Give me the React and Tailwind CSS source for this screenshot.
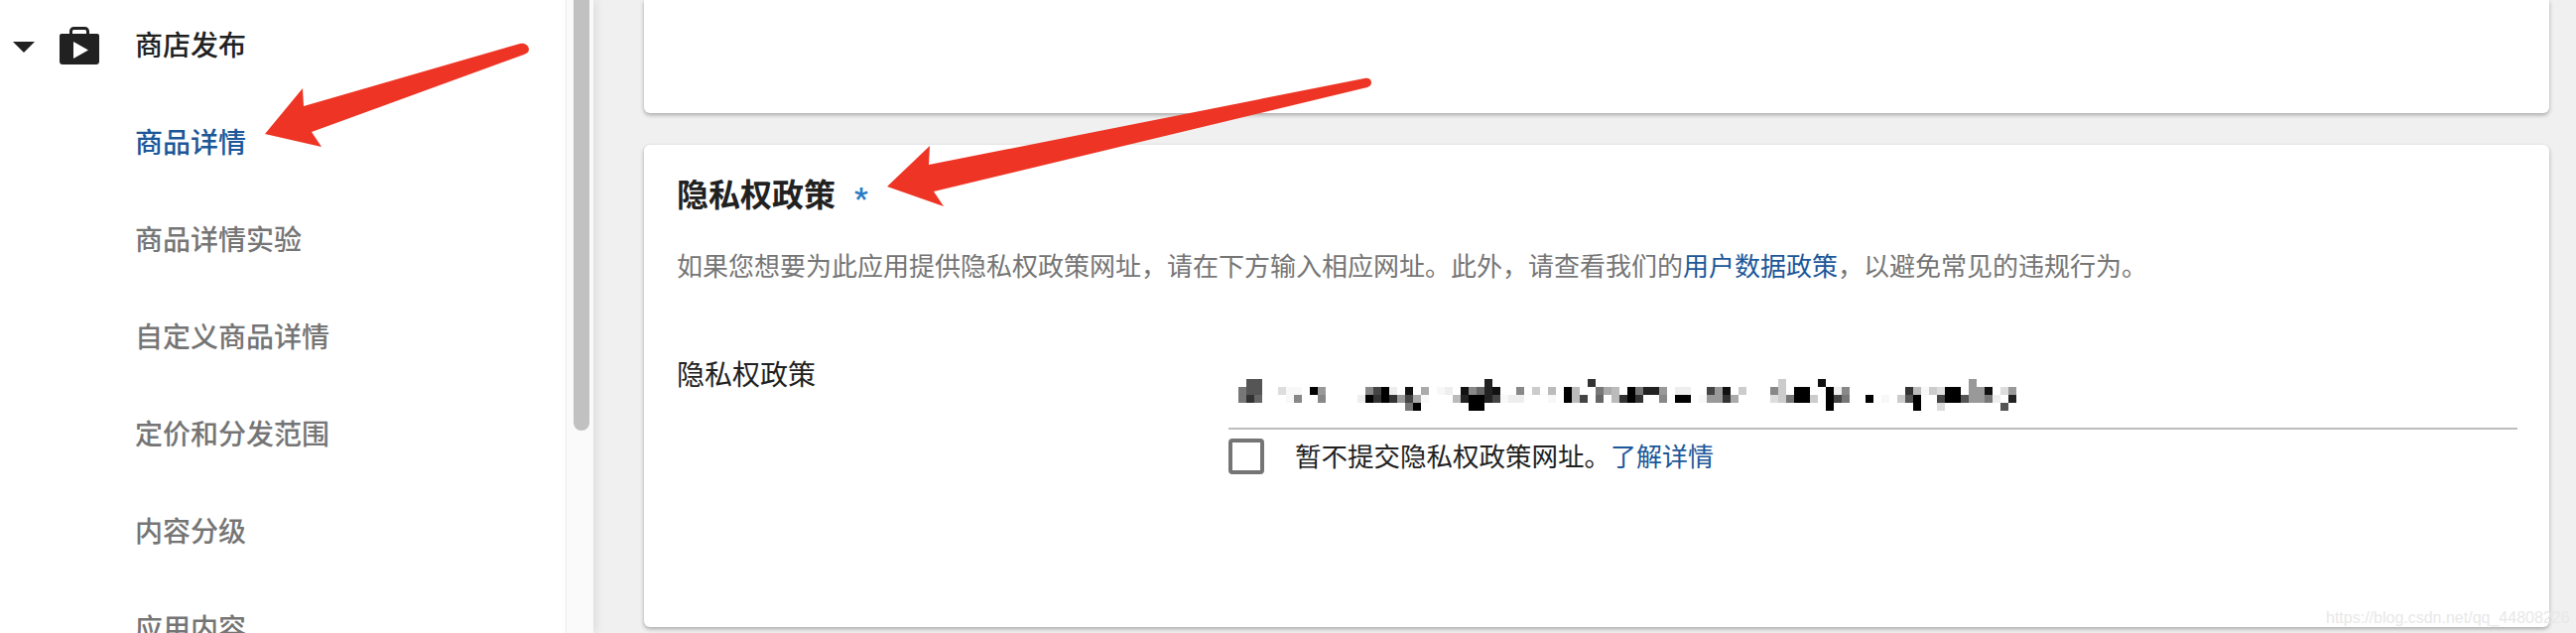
import React from 'react';

const navItems = [
  { label: '商品详情', color: 'text-[#1c5799]' },
  { label: '商品详情实验', color: 'text-[#757575]' },
  { label: '自定义商品详情', color: 'text-[#757575]' },
  { label: '定价和分发范围', color: 'text-[#757575]' },
  { label: '内容分级', color: 'text-[#757575]' },
  { label: '应用内容', color: 'text-[#757575]' },
];

const comma = '\uFF0C';

// blurred url: one string of "column:gray" pairs per 8px row
const mosaicRows = [
  '1:5 2:5 31:2 44:3 68:c 73:1 92:9',
  '0:7 1:5 2:5 5:d 6:f 7:f 9:0 10:9 16:8 17:4 18:0 19:e 21:1 23:a 25:f 26:e 28:1 29:8 30:6 31:2 32:1 35:8 37:c 39:b 41:0 42:b 45:7 46:a 47:b 49:0 50:7 51:2 52:2 53:9 55:e 56:e 59:4 60:9 61:1 63:c 67:8 68:c 70:0 71:0 74:0 75:e 76:8 84:3 85:b 86:f 87:c 88:d 89:0 90:0 92:9 93:9 94:1 96:d 97:9',
  '0:7 1:3 2:6 6:f 7:8 10:8 15:e 16:0 17:3 18:0 19:3 20:9 21:4 22:a 23:f 27:b 28:2 29:0 30:0 31:2 32:4 33:f 34:e 35:e 39:f 41:0 42:b 43:4 45:6 47:b 48:3 49:0 50:3 53:8 55:0 56:0 58:f 59:9 60:9 61:3 62:a 67:d 68:c 69:7 70:0 71:0 72:c 74:0 75:4 76:7 79:0 81:f 83:c 84:5 85:0 88:4 89:0 90:0 91:5 92:9 93:9 94:7 95:e 97:2',
  '21:7 22:0 29:0 30:0 74:0 85:0 88:d 96:5',
];

const grays = { 0: '#000', 1: '#111', 2: '#222', 3: '#333', 4: '#444', 5: '#555', 6: '#666', 7: '#777', 8: '#888', 9: '#999', a: '#aaa', b: '#bbb', c: '#ccc', d: '#ddd', e: '#eee', f: '#f8f8f8' };

const BlurredUrl = () => (
  <svg width="792" height="32" viewBox="0 0 792 32" className="block ml-[2px]">
    {mosaicRows.map((row, y) =>
      row.split(' ').map((cell) => {
        const [col, gray] = cell.split(':');
        return <rect key={`${y}-${col}`} x={col * 8} y={y * 8} width="8" height="8" fill={grays[gray]} />;
      })
    )}
  </svg>
);

const StoreIcon = () => (
  <svg width="40" height="38" viewBox="0 0 40 38" className="block">
    <path
      fillRule="evenodd"
      fill="#212121"
      d="M10 7V4.5C10 2 12 0 14.5 0h11C28 0 30 2 30 4.5V7h8c1.1 0 2 .9 2 2v26c0 1.7-1.3 3-3 3H3c-1.7 0-3-1.3-3-3V9c0-1.1.9-2 2-2zm3 0h14V4.5C27 3.7 26.3 3 25.5 3h-11C13.7 3 13 3.7 13 4.5zM14 15v17l15-8.5z"
    />
  </svg>
);

const App = () => {
  return (
    <div className="relative flex w-[2596px] h-[638px] overflow-hidden bg-[#f0f0f0] font-['Roboto','Noto_Sans_CJK_SC',sans-serif]">
      <aside className="w-[570px] h-full shrink-0 bg-white overflow-hidden">
        <div className="flex items-center h-[98px] -mt-[2px] pl-[13px]">
          <svg width="22" height="11" viewBox="0 0 22 11" className="block">
            <path d="M0 0h22L11 11z" fill="#212121" />
          </svg>
          <div className="ml-[25px] -mt-[2px]">
            <StoreIcon />
          </div>
          <span className="ml-[36px] text-[28px] font-medium text-[#212121]">商店发布</span>
        </div>
        {navItems.map((item) => (
          <div key={item.label} className={`flex items-center h-[98px] pl-[136px] text-[28px] font-medium ${item.color}`}>
            {item.label}
          </div>
        ))}
      </aside>

      <div className="relative z-10 w-[28px] h-full shrink-0 bg-[#fafafa] border-l border-l-[#eeeeee] pl-[7px] shadow-[3px_0_10px_rgba(0,0,0,0.08)]">
        <div className="w-[16px] h-[434px] bg-[#c1c1c1] rounded-b-[8px]" />
      </div>

      <main className="flex-1 pl-[51px] pr-[27px]">
        <div className="h-[114px] bg-white rounded-b-[6px] shadow-[0_2px_4px_rgba(0,0,0,0.3)]" />

        <section className="mt-[32px] h-[486px] bg-white rounded-[6px] pl-[33px] pr-[32px] pt-[29px] shadow-[0_2px_4px_rgba(0,0,0,0.3)]">
          <h2 className="flex items-center h-[44px] text-[32px] font-bold text-[#212121]">
            隐私权政策
            <span className="ml-[19px] mt-[5px] text-[30px] font-bold text-[#2b7bc4]">*</span>
          </h2>

          <p className="mt-[32px] h-[36px] leading-[36px] text-[26px] text-[#757575] whitespace-nowrap">
            如果您想要为此应用提供隐私权政策网址{comma}请在下方输入相应网址。此外{comma}请查看我们的
            <span className="text-[#1c5799]">用户数据政策</span>
            {comma}以避免常见的违规行为。
          </p>

          <div className="flex mt-[74px]">
            <div className="w-[556px] h-[36px] leading-[36px] text-[28px] text-[#212121]">隐私权政策</div>
            <div className="flex-1 pt-[21px]">
              <div className="ml-[8px] blur-[0.4px]">
                <BlurredUrl />
              </div>
              <div className="mt-[17px] h-[2px] bg-[#bdbdbd]" />
              <div className="flex items-center mt-[7px]">
                <div className="w-[36px] h-[36px] rounded-[4px] border-[4px] border-[#757575]" />
                <span className="ml-[31px] mt-[3px] text-[26.5px] leading-[36px] text-[#212121]">暂不提交隐私权政策网址。</span>
                <span className="mt-[3px] text-[26px] leading-[36px] text-[#1c5799]">了解详情</span>
              </div>
            </div>
          </div>
        </section>
      </main>

      {/* annotation arrows drawn on top of the screenshot */}
      <svg width="2596" height="638" viewBox="0 0 2596 638" className="absolute left-0 top-0 z-20 pointer-events-none">
        <path
          d="M524 44C529 43 533 46 533 50C533 52 531 54 528 55L314 133L324 148L267 135L305 89L306 107Z"
          fill="#ee3424"
        />
        <path
          d="M1375 79C1379 78 1382 80 1382 83C1382 85 1381 87 1378 88L941 193L951 208L894 188L937 147L936 166Z"
          fill="#ee3424"
        />
      </svg>

      <span className="absolute left-[2344px] top-[611px] z-20 text-[16px] font-['Liberation_Sans',sans-serif] text-[#e8e8e8] whitespace-nowrap">
        https://blog.csdn.net/qq_44808226
      </span>
    </div>
  );
};

export default App;
